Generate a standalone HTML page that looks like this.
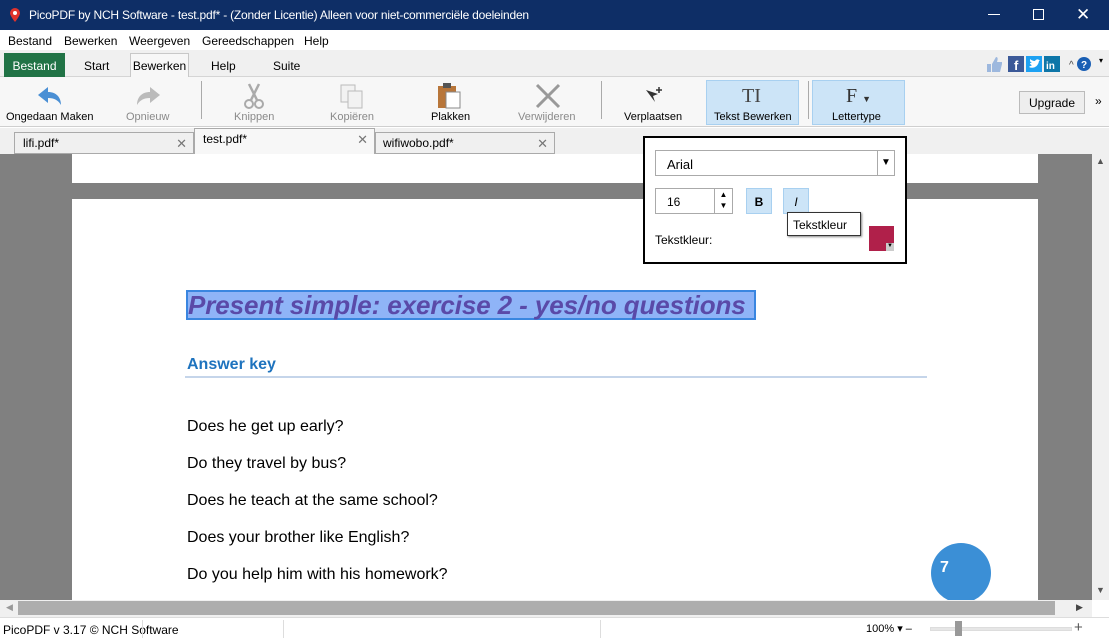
<!DOCTYPE html>
<html><head><meta charset="utf-8"><style>
*{margin:0;padding:0;box-sizing:border-box}
body{width:1109px;height:640px;overflow:hidden;font-family:"Liberation Sans",sans-serif;font-size:12px;color:#000;position:relative;background:#fff}
.a{position:absolute}
.title{left:0;top:0;width:1109px;height:30px;background:#0e2e66;color:#fff;font-size:12px}
.menu{top:30px;left:0;width:1109px;height:20px;background:#fff}
.menu span{position:absolute;top:4px;font-size:12px}
.tabs{top:50px;left:0;width:1109px;height:27px;background:#f0f0f0;border-bottom:1px solid #d5d5d5}
.tb{top:77px;left:0;width:1109px;height:50px;background:#f7f7f7;border-bottom:1px solid #cfcfcf}
.lbl{position:absolute;top:34px;font-size:11px;text-align:center;white-space:nowrap}
.g{color:#8a8a8a}
.dt{top:128px;left:0;width:1109px;height:26px;background:#f0f0f0}
.doc{top:154px;left:0;width:1092px;height:446px;background:#808080;overflow:hidden}
.q{position:absolute;left:115px;font-size:16px}
</style></head><body>
<div class="a title">
 <svg class="a" style="left:9px;top:7px" width="12" height="16"><path d="M6 1a5 5 0 0 1 5 5c0 3-5 9-5 9S1 9 1 6a5 5 0 0 1 5-5z" fill="#e0332c"/><circle cx="6" cy="6" r="2" fill="#fff"/></svg>
 <span class="a" style="left:29px;top:8px;letter-spacing:-0.2px">PicoPDF by NCH Software - test.pdf* - (Zonder Licentie) Alleen voor niet-commerciële doeleinden</span>
 <span class="a" style="left:988px;top:14px;width:12px;height:1px;background:#fff"></span>
 <span class="a" style="left:1033px;top:9px;width:11px;height:11px;border:1px solid #fff"></span>
 <span class="a" style="left:1076px;top:5px;font-size:17px">✕</span>
</div>
<div class="a menu"><span style="left:8px">Bestand</span><span style="left:64px">Bewerken</span><span style="left:129px">Weergeven</span><span style="left:202px">Gereedschappen</span><span style="left:304px">Help</span></div>
<div class="a tabs">
 <div class="a" style="left:4px;top:3px;width:61px;height:24px;background:#217346;color:#fff;text-align:center;padding-top:6px">Bestand</div>
 <span class="a" style="left:84px;top:9px">Start</span>
 <div class="a" style="left:130px;top:3px;width:59px;height:25px;background:#f7f7f7;border:1px solid #c8c8c8;border-bottom:none;text-align:center;padding-top:5px">Bewerken</div>
 <span class="a" style="left:211px;top:9px">Help</span>
 <span class="a" style="left:273px;top:9px">Suite</span>
 <svg class="a" style="left:985px;top:5px" width="110" height="18">
  <path d="M2 9h4v8H2zM7 9l4-7c2 0 2 2 1 5h5v2l-2 8H7z" fill="#9db8de"/>
  <rect x="23" y="1" width="16" height="16" fill="#3b5998"/><text x="29" y="15" fill="#fff" font-size="13" font-weight="bold" font-family="Liberation Sans">f</text>
  <rect x="41" y="1" width="16" height="16" fill="#1da1f2"/><path d="M44 12c4 2 9 0 10-6l1-1-1 0c-1-1-3-1-4 1-2 0-4-1-5-2 0 2 0 3 2 4-1 0-1 0-2 0 0 1 1 2 2 2-1 1-2 1-3 2z" fill="#fff"/>
  <rect x="59" y="1" width="16" height="16" fill="#0e76a8"/><text x="61" y="14" fill="#fff" font-size="10" font-weight="bold" font-family="Liberation Sans">in</text>
  <text x="84" y="13" font-size="10" fill="#444">^</text>
  <circle cx="99" cy="9" r="7" fill="#1a5fb4"/><text x="96" y="13" fill="#fff" font-size="10" font-weight="bold" font-family="Liberation Sans">?</text>
 </svg>
 <span class="a" style="left:1099px;top:6px;font-size:8px">▾</span>
</div>
<div class="a tb">
 <svg class="a" style="left:36px;top:8px" width="28" height="22"><path d="M2 10L12 2v5c8 0 13 5 13 13-3-5-7-7-13-7v5z" fill="#4a8fd4"/></svg>
 <div class="lbl" style="left:6px">Ongedaan Maken</div>
 <svg class="a" style="left:134px;top:8px" width="28" height="22"><path d="M26 10L16 2v5C8 7 3 12 3 20c3-5 7-7 13-7v5z" fill="#bbb"/></svg>
 <div class="lbl g" style="left:126px">Opnieuw</div>
 <div class="a" style="left:201px;top:4px;width:1px;height:38px;background:#aaa"></div>
 <svg class="a" style="left:243px;top:6px" width="22" height="26"><path d="M6 1l8 16M16 1L8 17" stroke="#aaa" stroke-width="2.5"/><circle cx="6" cy="21" r="4" fill="none" stroke="#aaa" stroke-width="2"/><circle cx="16" cy="21" r="4" fill="none" stroke="#aaa" stroke-width="2"/></svg>
 <div class="lbl g" style="left:234px">Knippen</div>
 <svg class="a" style="left:340px;top:6px" width="24" height="26"><rect x="1" y="2" width="14" height="17" fill="#f2f2f2" stroke="#bbb"/><rect x="8" y="8" width="14" height="17" fill="#f2f2f2" stroke="#bbb"/></svg>
 <div class="lbl g" style="left:330px">Kopiëren</div>
 <svg class="a" style="left:437px;top:5px" width="26" height="28"><rect x="1" y="4" width="18" height="22" fill="#b8763a"/><rect x="6" y="1" width="8" height="5" fill="#555"/><rect x="9" y="10" width="14" height="16" fill="#fff" stroke="#888"/></svg>
 <div class="lbl" style="left:431px">Plakken</div>
 <svg class="a" style="left:535px;top:6px" width="26" height="26"><path d="M2 2l22 22M24 2L2 24" stroke="#999" stroke-width="3"/></svg>
 <div class="lbl g" style="left:518px">Verwijderen</div>
 <div class="a" style="left:601px;top:4px;width:1px;height:38px;background:#aaa"></div>
 <svg class="a" style="left:644px;top:9px" width="20" height="20"><path d="M2 4l12 4-5 2 2 6z" fill="#333"/><path d="M15 1v6M12 4h6" stroke="#333" stroke-width="1.5"/></svg>
 <div class="lbl" style="left:624px">Verplaatsen</div>
 <div class="a" style="left:706px;top:3px;width:93px;height:45px;background:#cce4f7;border:1px solid #a8d0f0"></div>
 <div class="a" style="left:742px;top:8px;font-family:'Liberation Serif',serif;font-size:20px;color:#444">T<span style="font-weight:100">I</span></div>
 <div class="lbl" style="left:714px">Tekst Bewerken</div>
 <div class="a" style="left:808px;top:4px;width:1px;height:38px;background:#aaa"></div>
 <div class="a" style="left:812px;top:3px;width:93px;height:45px;background:#cce4f7;border:1px solid #a8d0f0"></div>
 <div class="a" style="left:846px;top:8px;font-family:'Liberation Serif',serif;font-size:20px;color:#333">F <span style="font-size:9px">▼</span></div>
 <div class="lbl" style="left:832px">Lettertype</div>
 <div class="a" style="left:1019px;top:14px;width:66px;height:23px;background:#eee;border:1px solid #bbb;text-align:center;padding-top:4px">Upgrade</div>
 <span class="a" style="left:1095px;top:17px;font-size:12px">»</span>
</div>
<div class="a dt">
 <div class="a" style="left:14px;top:4px;width:180px;height:22px;background:#f0f0f0;border:1px solid #aaa;padding:3px 8px">lifi.pdf*<span style="position:absolute;right:6px;top:3px;color:#777;font-size:13px">✕</span></div>
 <div class="a" style="left:194px;top:0;width:181px;height:26px;background:#f7f7f7;border:1px solid #aaa;border-bottom:none;padding:3px 8px">test.pdf*<span style="position:absolute;right:6px;top:3px;color:#777;font-size:13px">✕</span></div>
 <div class="a" style="left:375px;top:4px;width:180px;height:22px;background:#f0f0f0;border:1px solid #aaa;padding:3px 7px">wifiwobo.pdf*<span style="position:absolute;right:6px;top:3px;color:#777;font-size:13px">✕</span></div>
</div>
<div class="a doc">
 <div class="a" style="left:72px;top:0;width:966px;height:29px;background:#fff"></div>
 <div class="a" style="left:72px;top:45px;width:966px;height:410px;background:#fff">
  <div class="a" style="left:114px;top:91px;width:570px;height:30px;background:#8fb4f7;border:2px solid #3a86e0"></div>
  <div class="a" style="left:116px;top:91px;font-size:26px;font-weight:bold;font-style:italic;color:#5a4aa8;white-space:nowrap;letter-spacing:-0.1px">Present simple: exercise 2 - yes/no questions</div>
  <div class="a" style="left:115px;top:157px;font-size:16px;font-weight:bold;color:#1e73be">Answer key</div>
  <div class="a" style="left:113px;top:177px;width:742px;height:2px;background:#c5d5ea"></div>
  <div class="q" style="top:219px">Does he get up early?</div>
  <div class="q" style="top:256px">Do they travel by bus?</div>
  <div class="q" style="top:293px">Does he teach at the same school?</div>
  <div class="q" style="top:330px">Does your brother like English?</div>
  <div class="q" style="top:367px">Do you help him with his homework?</div>
  <div class="a" style="left:859px;top:344px;width:60px;height:60px;border-radius:50%;background:#3b8fd6;color:#fff;font-weight:bold;font-size:16px;padding:16px 0 0 9px">7</div>
 </div>
</div>
<div class="a" style="left:1092px;top:154px;width:17px;height:446px;background:#f0f0f0"><span class="a" style="left:4px;top:2px;font-size:9px;color:#555">▲</span><span class="a" style="left:4px;top:431px;font-size:9px;color:#555">▼</span></div>
<div class="a" style="left:0;top:600px;width:1092px;height:17px;background:#f0f0f0"><div class="a" style="left:18px;top:1px;width:1037px;height:14px;background:#adadad"></div><span class="a" style="left:6px;top:2px;font-size:9px;color:#999">◀</span><span class="a" style="left:1076px;top:2px;font-size:9px;color:#444">▶</span></div>
<div class="a" style="left:0;top:617px;width:1109px;height:23px;background:#fff;border-top:1px solid #ddd">
 <span class="a" style="left:3px;top:5px">PicoPDF v 3.17 © NCH Software</span>
 <div class="a" style="left:142px;top:2px;width:1px;height:18px;background:#ddd"></div>
 <div class="a" style="left:283px;top:2px;width:1px;height:18px;background:#ddd"></div>
 <div class="a" style="left:600px;top:2px;width:1px;height:18px;background:#ddd"></div>
 <span class="a" style="left:866px;top:4px;font-size:11px">100% ▾ –</span>
 <div class="a" style="left:930px;top:9px;width:142px;height:4px;background:#e6e6e6;border:1px solid #ddd"></div>
 <div class="a" style="left:955px;top:3px;width:7px;height:15px;background:#999"></div>
 <span class="a" style="left:1074px;top:1px;font-size:15px;color:#555">+</span>
</div>
<div class="a" style="left:643px;top:136px;width:264px;height:128px;background:#fff;border:2px solid #000">
 <div class="a" style="left:10px;top:12px;width:240px;height:26px;border:1px solid #aaa;padding:6px 11px;font-size:13px">Arial<div class="a" style="right:0;top:0;width:17px;height:24px;border-left:1px solid #aaa;font-size:10px;padding:6px 3px">▼</div></div>
 <div class="a" style="left:10px;top:50px;width:78px;height:26px;border:1px solid #aaa;padding:6px 11px;font-size:12px">16<div class="a" style="right:0;top:0;width:18px;height:24px;border-left:1px solid #aaa;font-size:8px;line-height:11px;text-align:center">▲<br>▼</div></div>
 <div class="a" style="left:101px;top:50px;width:26px;height:26px;background:#cce4f7;border:1px solid #a8d0f0;text-align:center;padding-top:6px;font-weight:bold">B</div>
 <div class="a" style="left:138px;top:50px;width:26px;height:26px;background:#cce4f7;border:1px solid #a8d0f0;text-align:center;padding-top:6px;font-style:italic">I</div>
 <div class="a" style="left:142px;top:74px;width:74px;height:24px;background:#fff;border:1px solid #333;padding:5px 5px;box-shadow:1px 1px 2px #888">Tekstkleur</div>
 <span class="a" style="left:10px;top:95px">Tekstkleur:</span>
 <div class="a" style="left:224px;top:88px;width:25px;height:25px;background:#b0204a"><div class="a" style="right:0;bottom:0;width:8px;height:8px;background:#ccc;font-size:6px;text-align:center">▼</div></div>
</div>
</body></html>
